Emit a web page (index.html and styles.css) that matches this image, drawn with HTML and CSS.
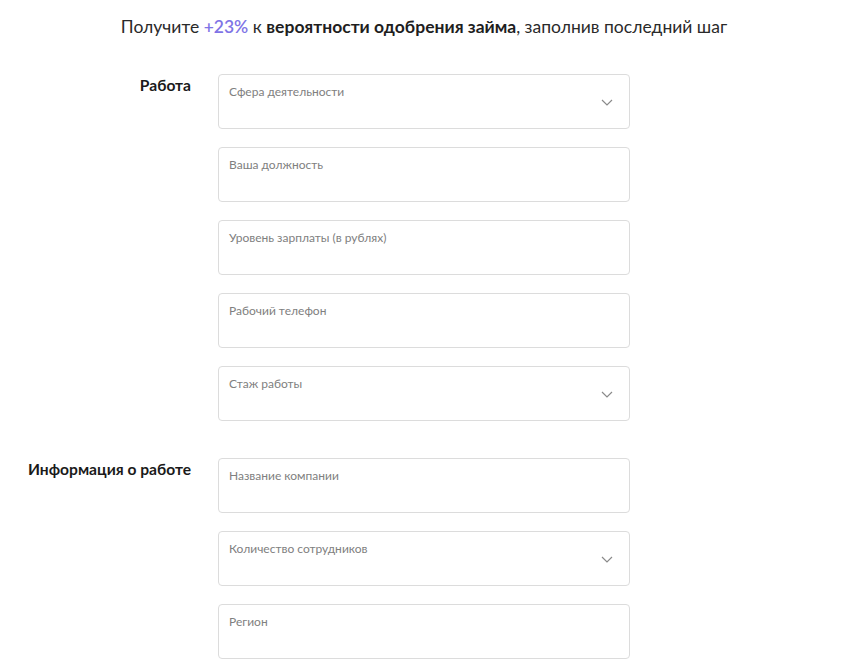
FILE: index.html
```html
<!DOCTYPE html>
<html lang="ru">
<head>
<meta charset="utf-8">
<link rel="stylesheet" href="styles.css">
</head>
<body>
<div class="page">
  <p class="promo">Получите <span class="accent">+23%</span> к <b>вероятности одобрения займа</b>, заполнив последний шаг</p>

  <section class="group">
    <h3 class="group-title">Работа</h3>
    <div class="fields">
      <div class="field select"><span class="ph">Сфера деятельности</span><svg class="chev" viewBox="0 0 12 7"><path d="M1 1l5 5 5-5"/></svg></div>
      <div class="field"><span class="ph">Ваша должность</span></div>
      <div class="field"><span class="ph">Уровень зарплаты (в рублях)</span></div>
      <div class="field"><span class="ph">Рабочий телефон</span></div>
      <div class="field select"><span class="ph">Стаж работы</span><svg class="chev" viewBox="0 0 12 7"><path d="M1 1l5 5 5-5"/></svg></div>
    </div>
  </section>

  <section class="group">
    <h3 class="group-title">Информация о работе</h3>
    <div class="fields">
      <div class="field"><span class="ph">Название компании</span></div>
      <div class="field select"><span class="ph">Количество сотрудников</span><svg class="chev" viewBox="0 0 12 7"><path d="M1 1l5 5 5-5"/></svg></div>
      <div class="field"><span class="ph">Регион</span></div>
    </div>
  </section>
</div>
</body>
</html>
```

FILE: styles.css
```css
* { box-sizing: border-box; }
html, body { margin: 0; padding: 0; background: #fff; }
body { font-family: Lato, "Open Sans", sans-serif; color: #222; }
.page { width: 848px; padding-top: 16px; }
.promo {
  margin: 0 0 36px;
  text-align: center;
  font-size: 17.5px;
  line-height: 22px;
  color: #2a2a2a;
}
.promo b { font-weight: 700; color: #1e1e1e; }
.accent { color: #7f74e6; font-weight: 600; }
.group { display: flex; gap: 27px; margin-bottom: 37px; }
.group-title {
  width: 191px;
  margin: 0;
  padding-top: 2px;
  text-align: right;
  font-size: 15.6px;
  line-height: 18px;
  font-weight: 700;
  color: #1a1a1a;
}
.fields { display: flex; flex-direction: column; gap: 18px; width: 412px; }
.field {
  position: relative;
  height: 55px;
  border: 1px solid #dcdcdc;
  border-radius: 4px;
  padding: 5px 10px;
}
.ph { font-size: 12px; line-height: 16px; color: #808080; }
.chev {
  position: absolute;
  right: 16px;
  top: 24px;
  width: 12px;
  height: 7px;
  fill: none;
  stroke: #8a8a8a;
  stroke-width: 1.2;
}
```
